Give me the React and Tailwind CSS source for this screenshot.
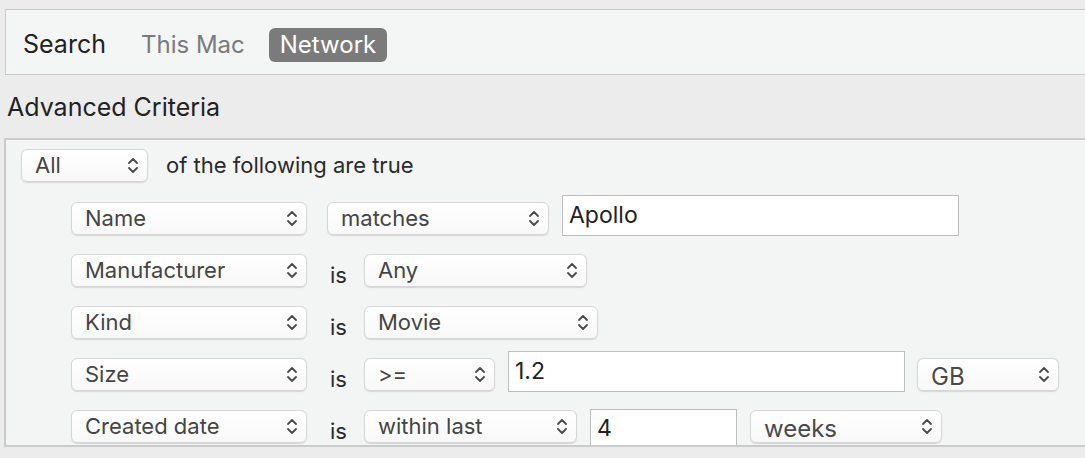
import React from "react";

const font = { fontFamily: "Inter, 'Liberation Sans', sans-serif" };

function Chevrons() {
  return (
    <svg width="12" height="19" viewBox="0 0 12 19" className="shrink-0">
      <path d="M2 7 L6 3 L10 7" fill="none" stroke="#4a4a4a" strokeWidth="1.8" strokeLinecap="round" strokeLinejoin="round" />
      <path d="M2 12 L6 16 L10 12" fill="none" stroke="#4a4a4a" strokeWidth="1.8" strokeLinecap="round" strokeLinejoin="round" />
    </svg>
  );
}

function Popup({ label, w, big }) {
  return (
    <div
      className={`${w} h-[33px] shrink-0 flex items-center justify-between pl-[13px] pr-[8px] rounded-[6px] border border-[#d6d6d6] bg-gradient-to-b from-white to-[#f8f8f8] shadow-[0_1px_1px_rgba(0,0,0,0.12)]`}
    >
      <span className={big ? "text-[24px] text-[#4a4a4a] pt-[5px]" : "text-[22px] text-[#454545]"}>{label}</span>
      <Chevrons />
    </div>
  );
}

function Field({ value, w, extra = "" }) {
  return (
    <div className={`${w} h-[41px] shrink-0 flex items-center pl-[6px] bg-white border border-[#bdbdbd] ${extra}`}>
      <span className="text-[23px] text-[#222]">{value}</span>
    </div>
  );
}

function Is() {
  return <div className="w-[57px] shrink-0 pl-[23px] pt-[10px] text-[22px] text-[#2a2a2a]">is</div>;
}

export default function App() {
  return (
    <div className="w-[1085px] h-[458px] bg-[#ececec] overflow-hidden" style={font}>
      <div className="ml-[5px] mr-[-4px] mt-[9px] h-[66px] border border-[#c9c9c9] bg-[#f4f5f5] flex items-center pl-[17px] pt-[5px]">
        <span className="text-[25px] text-[#222]">Search</span>
        <span className="ml-[35px] text-[24px] text-[#7a7a7a]">This Mac</span>
        <span className="ml-[24px] h-[34px] px-[11px] flex items-center rounded-[6px] bg-[#7b7b7b] text-[24px] text-white">
          Network
        </span>
      </div>
      <div className="h-[63px] flex items-center pl-[7px] pt-[2px] text-[25px] text-[#222]">Advanced Criteria</div>
      <div className="ml-[4px] mr-[-4px] h-[309px] border-2 border-[#cbcbcb] bg-[#f3f4f4] overflow-hidden">
        <div className="pl-[15px] pt-[9px] flex items-center">
          <Popup label="All" w="w-[127px]" />
          <span className="ml-[18px] text-[22px] text-[#2a2a2a]">of the following are true</span>
        </div>
        <div className="mt-[10px] pl-[65px] flex flex-col">
          <div className="h-[52px] flex items-center">
            <Popup label="Name" w="w-[236px]" />
            <div className="w-[20px]" />
            <Popup label="matches" w="w-[222px]" />
            <div className="w-[13px]" />
            <Field value="Apollo" w="w-[397px]" extra="mb-[6px]" />
          </div>
          <div className="h-[52px] flex items-center">
            <Popup label="Manufacturer" w="w-[236px]" />
            <Is />
            <Popup label="Any" w="w-[223px]" />
          </div>
          <div className="h-[52px] flex items-center">
            <Popup label="Kind" w="w-[236px]" />
            <Is />
            <Popup label="Movie" w="w-[234px]" />
          </div>
          <div className="h-[52px] flex items-center">
            <Popup label="Size" w="w-[236px]" />
            <Is />
            <Popup label=">=" w="w-[131px]" />
            <div className="w-[13px]" />
            <Field value="1.2" w="w-[397px]" extra="mb-[6px]" />
            <div className="w-[12px]" />
            <Popup label="GB" w="w-[142px]" big />
          </div>
          <div className="h-[52px] flex items-center">
            <Popup label="Created date" w="w-[236px]" />
            <Is />
            <Popup label="within last" w="w-[213px]" />
            <div className="w-[13px]" />
            <Field value="4" w="w-[147px]" extra="mt-[7px] items-end pb-[4px]" />
            <div className="w-[13px]" />
            <Popup label="weeks" w="w-[192px]" big />
          </div>
        </div>
      </div>
    </div>
  );
}
